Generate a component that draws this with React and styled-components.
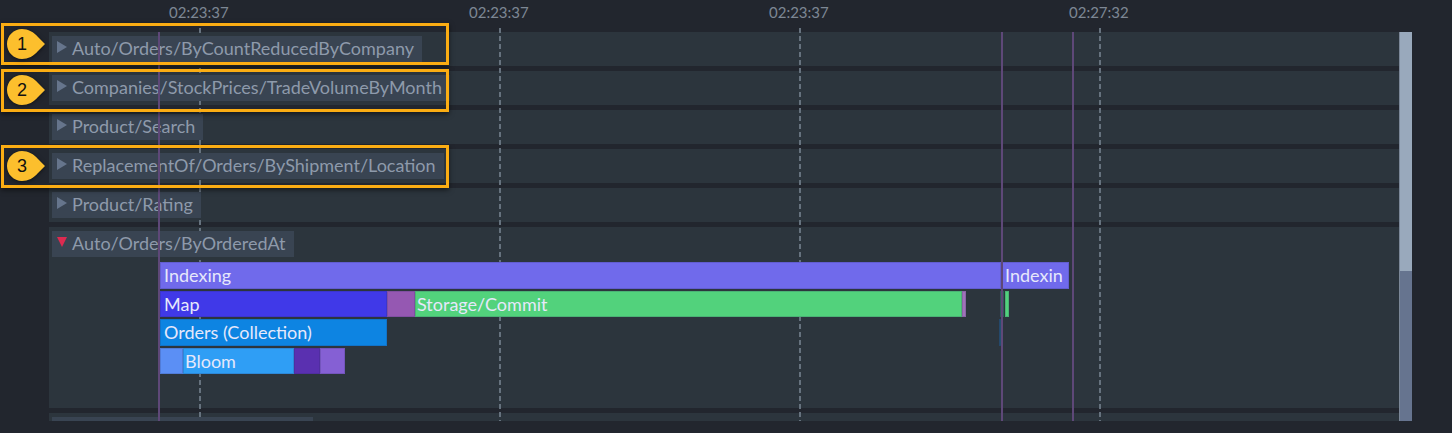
import React from 'react';
import styled, { createGlobalStyle } from 'styled-components';

const GlobalStyle = createGlobalStyle`
	html, body {
		margin: 0;
		height: 100%;
		overflow: hidden;
		background: #22262e;
		font-family: Lato, "Open Sans", sans-serif;
	}
`;

const Page = styled.div`
	position: relative;
	width: 1452px;
	height: 433px;
	background: #22262e;
	overflow: hidden;
`;
const Ticks = styled.div`
	display: grid;
	grid-template-columns: repeat(4, 300px);
	height: 32px;
	padding-left: 169px;
`;
const Tick = styled.span`
	width: 60px;
	padding-top: 3px;
	font-size: 15px;
	line-height: 18px;
	color: #7d8794;
	white-space: nowrap;
`;
const Body = styled.div`
	display: flex;
	height: 389px;
	padding-left: 49px;
`;
const Rows = styled.div`
	display: flex;
	flex-direction: column;
	gap: 5px;
	width: 1350px;
	overflow: hidden;
`;
const Row = styled.div`
	flex: none;
	display: flex;
	flex-direction: column;
	align-items: flex-start;
	height: ${p => p.$height || 34}px;
	padding: 4px 0 0 3px;
	box-sizing: border-box;
	background: #2c353d;
`;
const Tag = styled.div`
	position: relative;
	z-index: 2;
	flex: none;
	display: flex;
	align-items: center;
	gap: 5px;
	height: 26px;
	padding: 0 8px 2px 5px;
	box-sizing: border-box;
	background: #394452;
	color: #8e9aab;
	font-size: 18px;
	line-height: 24px;
	white-space: nowrap;
`;
const EmptyTag = styled.div`
	position: relative;
	z-index: 2;
	flex: none;
	width: ${p => p.$width}px;
	height: 26px;
	background: #394452;
`;
const Arrow = styled.svg`
	flex: none;
	width: 10px;
	height: 12px;
	margin-top: -2px;
	fill: ${p => (p.$open ? '#dd2a50' : '#66758c')};
`;
const Scrollbar = styled.div`
	flex: none;
	display: flex;
	flex-direction: column;
	width: 13px;
	background: #66748f;
	border-left: 1px solid #7b8798;
	box-sizing: border-box;
`;
const Thumb = styled.div`
	height: 239px;
	background: #99a9bc;
`;
const Flame = styled.div`
	display: flex;
	flex-direction: column;
	gap: 2px;
	margin: 5px 0 0 108px;
`;
const Track = styled.div`
	position: relative;
	z-index: 2;
	display: flex;
	height: 26.5px;
`;
const Bar = styled.div`
	flex: none;
	width: ${p => p.$width}px;
	margin-left: ${p => p.$gap || 0}px;
	padding-left: ${p => p.$inset || 4}px;
	box-sizing: border-box;
	background: ${p => p.$color};
	box-shadow: inset 0 0 0 1px rgba(40, 40, 90, 0.18);
	color: #e6e8fb;
	font-size: 18px;
	line-height: 26px;
	white-space: nowrap;
	overflow: hidden;
`;
const Line = styled.div`
	position: absolute;
	left: ${p => p.$x}px;
	top: 32px;
	width: 2px;
	height: 389px;
	z-index: 3;
	background: #5e4878;
`;
const Dashed = styled.div`
	position: absolute;
	left: ${p => p.$x}px;
	top: 28px;
	width: 2px;
	height: 393px;
	z-index: 1;
	background: repeating-linear-gradient(to bottom, #66727e 0 5px, transparent 5px 8px);
`;
const Highlight = styled.div`
	position: absolute;
	left: 1px;
	top: ${p => p.$top}px;
	width: 448px;
	height: ${p => p.$height}px;
	z-index: 4;
	box-sizing: border-box;
	border: 3px solid #fbad13;
	box-shadow: 0 2px 5px rgba(0, 0, 0, 0.55);
`;
const Callout = styled.div`
	position: absolute;
	left: 3px;
	top: 3px;
	display: flex;
	align-items: center;
	justify-content: center;
	width: 30px;
	height: 30px;
	color: #111;
	font-family: "Liberation Sans", Arial, sans-serif;
	font-size: 18px;
	line-height: 30px;

	& span {
		position: relative;
	}
`;
const CalloutShape = styled.svg`
	position: absolute;
	left: 0;
	top: 0;
	width: 38px;
	height: 30px;
	overflow: visible;
	fill: #fcbf2d;
	filter: drop-shadow(0 1px 2px rgba(0, 0, 0, 0.5));
`;

const times = ['02:23:37', '02:23:37', '02:23:37', '02:27:32'];
const dashes = [199, 499, 799, 1099];
const closed = [
	'Auto/Orders/ByCountReducedByCompany',
	'Companies/StockPrices/TradeVolumeByMonth',
	'Product/Search',
	'ReplacementOf/Orders/ByShipment/Location',
	'Product/Rating',
];
const notes = [
	{ n: 1, top: 23, height: 42 },
	{ n: 2, top: 69, height: 43 },
	{ n: 3, top: 145, height: 43 },
];

const RowTag = ({ name, open }) => (
	<Tag>
		<Arrow $open={open} viewBox="0 0 10 12">
			{open ? <path d="M0 1h10L5 11z" /> : <path d="M0 0l10 6-10 6z" />}
		</Arrow>
		{name}
	</Tag>
);

const App = () => (
	<Page>
		<GlobalStyle />
		<Ticks>
			{times.map((t, i) => (
				<Tick key={i}>{t}</Tick>
			))}
		</Ticks>
		<Body>
			<Rows>
				{closed.map(name => (
					<Row key={name}>
						<RowTag name={name} />
					</Row>
				))}
				<Row $height={181}>
					<RowTag name="Auto/Orders/ByOrderedAt" open />
					<Flame>
						<Track>
							<Bar $width={841} $color="#706aeb">Indexing</Bar>
							<Bar $width={68} $color="#706aeb">Indexin</Bar>
						</Track>
						<Track>
							<Bar $width={227} $color="#4039e8">Map</Bar>
							<Bar $width={28} $color="#9558b2" />
							<Bar $width={547} $inset={2} $color="#52d27c">Storage/Commit</Bar>
							<Bar $width={3} $color="#a072b8" />
							<Bar $width={3} $gap={34} $color="#2f6a58" />
							<Bar $width={4} $gap={1} $color="#52d27c" />
						</Track>
						<Track>
							<Bar $width={227} $color="#0d84e2">Orders (Collection)</Bar>
							<Bar $width={3} $gap={612} $color="#24506f" />
						</Track>
						<Track>
							<Bar $width={23} $color="#5b8ff5" />
							<Bar $width={111} $inset={2} $color="#2f9ef5">Bloom</Bar>
							<Bar $width={26} $color="#5a30b0" />
							<Bar $width={25} $color="#8560d4" />
						</Track>
					</Flame>
				</Row>
				<Row>
					<EmptyTag $width={261} />
				</Row>
			</Rows>
			<Scrollbar>
				<Thumb />
			</Scrollbar>
		</Body>
		{dashes.map(x => (
			<Dashed key={x} $x={x} />
		))}
		<Line $x={158} />
		<Line $x={1001} />
		<Line $x={1072} />
		{notes.map(note => (
			<Highlight key={note.n} $top={note.top} $height={note.height}>
				<Callout>
					<CalloutShape viewBox="0 0 38 30">
						<path d="M15 0C21 0 27 3 31 8L38 15 31 22C27 27 21 30 15 30 6.7 30 0 23.3 0 15S6.7 0 15 0z" />
					</CalloutShape>
					<span>{note.n}</span>
				</Callout>
			</Highlight>
		))}
	</Page>
);

export default App;
